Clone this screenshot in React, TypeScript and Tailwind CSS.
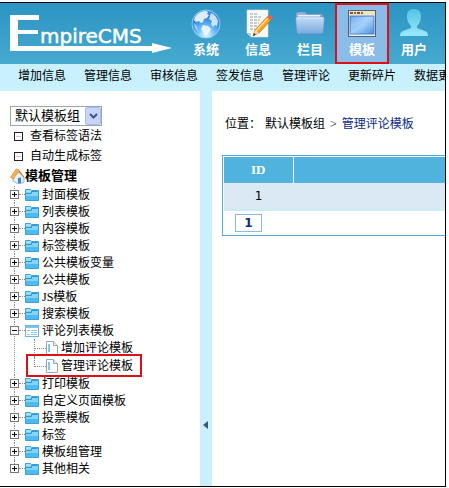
import type { ReactNode } from "react";

type NavItem = {
  label: string;
  icon: ReactNode;
  active?: boolean;
};

type TreeNode = {
  label: string;
  children?: { label: string; highlighted?: boolean }[];
};

const GlobeIcon = () => (
  <svg width="30" height="30" viewBox="0 0 30 30" aria-hidden="true">
    <defs>
      <radialGradient id="globe" cx="0.5" cy="0.9" r="0.95">
        <stop offset="0" stopColor="#e4f7ff" />
        <stop offset="0.35" stopColor="#6bbcf5" />
        <stop offset="0.7" stopColor="#2a7edc" />
        <stop offset="1" stopColor="#4f9fe6" />
      </radialGradient>
    </defs>
    <circle cx="15" cy="15" r="14" fill="url(#globe)" stroke="#a9d8f7" strokeWidth="0.8" />
    <path
      d="M4 8q4-6 11-6l2 1-1 2 2 1-2 3-3 1-1 3-2 1-2-2-3 1-2-2z"
      fill="#f1faff"
      opacity="0.9"
    />
    <path
      d="M20 4q5 2 7 8l-1 5-2-1-2 2-2-3 1-3-3-2 1-3z"
      fill="#e0f3ff"
      opacity="0.85"
    />
    <path d="M12 16l5 1 3 3-2 4-4 3-2-4-2-3z" fill="#f1faff" opacity="0.85" />
    <path d="M3 14l3 3 1 5q-4-3-4-8z" fill="#cdeaff" opacity="0.6" />
  </svg>
);

const NoteIcon = () => (
  <svg width="30" height="30" viewBox="0 0 30 30" aria-hidden="true">
    <path d="M4 1h21v27H8l-4-4z" fill="#fbfaf2" stroke="#d9dcd8" strokeWidth="0.6" />
    <path
      d="M7 5h8M7 8h12M7 11h10M7 14h9M7 17h7M7 20h5"
      stroke="#8f9db0"
      strokeWidth="1"
      strokeDasharray="3 1"
    />
    <path d="M4 24l4 4v-4z" fill="#c4cacb" />
    <path d="M10 27l2-6L24 8l4 3-12 13z" fill="#f6a423" stroke="#b8620e" strokeWidth="0.7" />
    <path d="M13 22L25 9" stroke="#ffe08a" strokeWidth="1.4" />
    <path d="M10 27l2-6 4 3z" fill="#f7ddb0" />
    <path d="M10 27l1-3 2 1.500z" fill="#333" />
    <path d="M24 8l2-2q3 0 3.500 3L28 11z" fill="#e0605a" />
  </svg>
);

const FolderIcon = () => (
  <svg width="30" height="30" viewBox="0 0 30 30" aria-hidden="true">
    <defs>
      <linearGradient id="folder" x1="0" y1="0" x2="0" y2="1">
        <stop offset="0" stopColor="#c3dcf6" />
        <stop offset="1" stopColor="#78a8dd" />
      </linearGradient>
    </defs>
    <path d="M1 5q0-2 2-2h7l2 2h14q2 0 2 2v3H1z" fill="#8fb6e2" stroke="#5d8ac2" strokeWidth="0.7" />
    <path d="M3 6h22v3H3z" fill="#eef6fd" />
    <path d="M0.500 8h29l-1 15q0 2-2 2h-23q-2 0-2-2z" fill="url(#folder)" stroke="#5d8ac2" strokeWidth="0.7" />
    <path d="M2 9h26" stroke="#e2f0fc" />
  </svg>
);

const WindowIcon = () => (
  <svg width="30" height="30" viewBox="0 0 30 30" aria-hidden="true">
    <defs>
      <linearGradient id="pane" x1="0" y1="0" x2="1" y2="1">
        <stop offset="0" stopColor="#5b9be8" />
        <stop offset="0.5" stopColor="#a4d0fa" />
        <stop offset="1" stopColor="#4b90e0" />
      </linearGradient>
    </defs>
    <rect x="1.500" y="1.500" width="27" height="26" fill="#e9eef2" stroke="#4d6380" />
    <rect x="2" y="2" width="26" height="4" fill="#f3e3b8" />
    <path d="M3 4h3M10 4h3" stroke="#b23a2c" strokeWidth="2" />
    <path d="M7 4h2M14 4h2" stroke="#438b3e" strokeWidth="2" />
    <rect x="3" y="7" width="24" height="18" fill="url(#pane)" stroke="#3b75bb" strokeWidth="0.8" />
    <path d="M4 8h22L4 19z" fill="#fff" opacity="0.15" />
  </svg>
);

const UserIcon = () => (
  <svg width="30" height="30" viewBox="0 0 30 30" aria-hidden="true">
    <defs>
      <linearGradient id="user" x1="0" y1="0" x2="0" y2="1">
        <stop offset="0" stopColor="#52c4e6" />
        <stop offset="1" stopColor="#9be9fa" />
      </linearGradient>
    </defs>
    <path
      d="M15 0c5 0 7 3 7 7 0 5-2 8-4 10v2l8 3q3 1 3 5H1q0-4 3-5l8-3v-2c-2-2-4-5-4-10 0-4 2-7 7-7z"
      fill="url(#user)"
    />
  </svg>
);

const TreeFolderIcon = () => (
  <svg width="14" height="14" viewBox="0 0 14 14" aria-hidden="true">
    <path d="M0.500 1.500h5l1 1h7v10h-13z" fill="#84d4fa" stroke="#3d9fd8" />
    <path d="M1 8h12v4H1z" fill="#4dbaf2" />
    <path d="M1 5.500h5.500v-2h6" fill="none" stroke="#2f95d3" />
    <path d="M1 3h5" stroke="#c3ecff" />
  </svg>
);

const TreeOpenIcon = () => (
  <svg width="14" height="14" viewBox="0 0 14 14" aria-hidden="true">
    <rect x="0.500" y="1.500" width="13" height="11" fill="#fff" stroke="#73b5dc" />
    <path d="M1 3h12" stroke="#7cc5ee" strokeWidth="2" />
    <path d="M2 6.500h3M2 10.500h3M6 6.500h6M6 8.500h6M6 10.500h6" stroke="#8fc9ea" />
  </svg>
);

const PageIcon = () => (
  <svg width="12" height="14" viewBox="0 0 12 14" aria-hidden="true">
    <path d="M0.500 0.500h7l4 4v9h-11z" fill="#fff" stroke="#93a9b8" />
    <path d="M7.500 0.500v4h4" fill="#e3f1f8" stroke="#93a9b8" />
    <path d="M3 3v8" stroke="#86c7e8" strokeWidth="2" />
  </svg>
);

const HomeIcon = () => (
  <svg width="15" height="16" viewBox="0 0 15 16" aria-hidden="true">
    <path d="M3 9l6-5 5 5v5.500L8 16l-5-3z" fill="#e2f1fd" stroke="#7ba9d4" strokeWidth="0.8" />
    <path d="M0.500 9.500L6 1l3 1-5.500 9z" fill="#f9b04e" stroke="#d98124" strokeWidth="0.6" />
    <path d="M9 2l5.500 7-1 0.500-5-5.500z" fill="#d98124" />
    <path d="M8 10l3-0.500v5.500L8 15.500z" fill="#3f87cc" />
  </svg>
);

const navItems: NavItem[] = [
  { label: "系统", icon: <GlobeIcon /> },
  { label: "信息", icon: <NoteIcon /> },
  { label: "栏目", icon: <FolderIcon /> },
  { label: "模板", icon: <WindowIcon />, active: true },
  { label: "用户", icon: <UserIcon /> },
];

const subMenu = [
  "增加信息",
  "管理信息",
  "审核信息",
  "签发信息",
  "管理评论",
  "更新碎片",
  "数据更新",
];

const tree: TreeNode[] = [
  { label: "封面模板" },
  { label: "列表模板" },
  { label: "内容模板" },
  { label: "标签模板" },
  { label: "公共模板变量" },
  { label: "公共模板" },
  { label: "JS模板" },
  { label: "搜索模板" },
  {
    label: "评论列表模板",
    children: [
      { label: "增加评论模板" },
      { label: "管理评论模板", highlighted: true },
    ],
  },
  { label: "打印模板" },
  { label: "自定义页面模板" },
  { label: "投票模板" },
  { label: "标签" },
  { label: "模板组管理" },
  { label: "其他相关" },
];

const Logo = () => (
  <svg width="180" height="61" viewBox="0 0 180 61" className="shrink-0" role="img" aria-label="EmpireCMS">
    <g fill="#fff">
      <rect x="10" y="12" width="8" height="36" />
      <rect x="10" y="12" width="29" height="5" />
      <rect x="10" y="27" width="28" height="4" />
      <rect x="10" y="43" width="143" height="5" />
      <polygon points="152,40 172,45 152,50" />
      <text
        x="40"
        y="40"
        stroke="#fff"
        strokeWidth="0.5"
        className="font-['DejaVu_Sans',sans-serif] text-[20px]"
      >
        mpireCMS
      </text>
    </g>
  </svg>
);

const Header = () => (
  <header>
    <div className="flex h-[61px] bg-linear-to-b from-[#2b94c2] to-[#46a9d0]">
      <Logo />
      <nav className="flex">
        {navItems.map((item) => (
          <a
            key={item.label}
            href="#"
            className={`flex shrink-0 flex-col items-center text-[13px] leading-4 font-bold text-white ${
              item.active
                ? "-mx-px w-[54px] border-2 border-[#dc1018] bg-[#8bbbe7] pt-1"
                : "w-[52px] pt-1.5"
            }`}
          >
            {item.icon}
            <span className="mt-[3px]">{item.label}</span>
          </a>
        ))}
      </nav>
    </div>
    <nav className="flex h-[27px] items-center gap-[18px] overflow-hidden bg-[#c8f0fd] pb-1 pl-[18px] whitespace-nowrap">
      {subMenu.map((label) => (
        <a key={label} href="#">
          {label}
        </a>
      ))}
    </nav>
  </header>
);

const TreeItem = ({ node, last }: { node: TreeNode; last: boolean }) => (
  <li className="relative">
    <span
      className={`absolute top-0 left-1 border-l border-dotted border-[#8a8a8a] ${
        last ? "h-2" : "h-full"
      }`}
    />
    <div className="relative flex h-[17px] items-center">
      <button
        aria-label={node.label}
        className="flex size-[9px] items-center justify-center border border-[#777] bg-white"
      >
        <svg width="5" height="5" viewBox="0 0 5 5" aria-hidden="true">
          <path d={node.children ? "M0 2.500h5" : "M0 2.500h5M2.500 0v5"} stroke="#000" />
        </svg>
      </button>
      <span className="w-1.5 border-t border-dotted border-[#8a8a8a]" />
      {node.children ? <TreeOpenIcon /> : <TreeFolderIcon />}
      <a href="#" className="ml-[3px]">
        {node.label}
      </a>
    </div>
    {node.children && (
      <ul>
        {node.children.map((child, i) => (
          <li key={child.label} className="relative flex h-[18px] items-center pl-6">
            <span
              className={`absolute top-0 left-6 border-l border-dotted border-[#8a8a8a] ${
                i === node.children!.length - 1 ? "h-2" : "h-full"
              }`}
            />
            <span className="w-3 border-t border-dotted border-[#8a8a8a]" />
            <PageIcon />
            <a href="#" className="ml-[3px]">
              {child.label}
            </a>
            {child.highlighted && (
              <span className="pointer-events-none absolute -top-[3px] left-4 h-[23px] w-[116px] border-2 border-[#dc1018]" />
            )}
          </li>
        ))}
      </ul>
    )}
  </li>
);

const Sidebar = () => (
  <aside className="w-[200px] shrink-0 px-2.5 pt-[15px] pb-[9px]">
    <div className="relative h-5 w-[92px]">
      <select
        aria-label="模板组"
        className="h-5 w-full appearance-none border border-[#9aa7b0] bg-white pl-1 text-[13px] leading-4"
      >
        <option>默认模板组</option>
      </select>
      <span className="pointer-events-none absolute top-px right-px flex h-[18px] w-4 items-center justify-center rounded-xs border border-[#a9bdec] bg-[#c5d5fb]">
        <svg width="9" height="6" viewBox="0 0 9 6" aria-hidden="true">
          <path d="M1 1l3.500 3.500L8 1" fill="none" stroke="#3f5685" strokeWidth="2" />
        </svg>
      </span>
    </div>
    {["查看标签语法", "自动生成标签"].map((label) => (
      <a key={label} href="#" className="flex h-5 items-center gap-[7px] pl-1">
        <svg width="9" height="9" viewBox="0 0 9 9" aria-hidden="true">
          <rect x="0.500" y="0.500" width="8" height="8" fill="#fff" stroke="#222" />
          <path d="M2 4.500h5" stroke="#c9c9c9" />
        </svg>
        {label}
      </a>
    ))}
    <h2 className="flex h-5 items-center text-[13px] font-bold">
      <HomeIcon />
      模板管理
    </h2>
    <ul>
      {tree.map((node, i) => (
        <TreeItem key={node.label} node={node} last={i === tree.length - 1} />
      ))}
    </ul>
  </aside>
);

const Content = () => (
  <main className="min-w-0 flex-1 overflow-hidden pt-6 pl-2.5">
    <div className="flex h-[18px] items-center pl-[3px] whitespace-nowrap">
      <span>位置：</span>
      <a href="#" className="ml-1">
        默认模板组
      </a>
      <span className="mx-[5px]">&gt;</span>
      <a href="#" className="text-[#0b2a80]">
        管理评论模板
      </a>
    </div>
    <div className="mt-[22px] border border-r-0 border-[#4fa9d8] pt-px pl-px">
      <table className="w-full border-collapse">
        <thead>
          <tr className="h-[26px] bg-[#4fb3de] font-['Liberation_Serif','Noto_Sans_CJK_SC',serif] text-[13px] text-white">
            <th className="w-[69px] border-r border-white">ID</th>
            <th />
          </tr>
        </thead>
        <tbody className="font-['DejaVu_Sans',sans-serif]">
          <tr className="h-[27px] border-b-2 border-[#cdebf2] bg-[#dbe9f5] text-center">
            <td>1</td>
            <td />
          </tr>
          <tr className="h-[25px]">
            <td colSpan={2} className="pl-[11px]">
              <a
                href="#"
                className="flex h-[18px] w-[27px] items-center justify-center border border-[#8fb8df] font-bold text-[#0b2a80]"
              >
                1
              </a>
            </td>
          </tr>
        </tbody>
      </table>
    </div>
  </main>
);

export default function App() {
  return (
    <div className="bg-white pt-0.5 pr-[3px] font-['Liberation_Serif','Noto_Sans_CJK_SC',serif] text-xs text-black">
      <div className="overflow-hidden border-y border-r border-black">
        <Header />
        <div className="flex">
          <Sidebar />
          <div className="w-3 shrink-0 bg-[#c8f0fd] pt-[330px] pl-[3px]">
            <button aria-label="收起" className="block">
              <svg width="5" height="8" viewBox="0 0 5 8" aria-hidden="true">
                <path d="M5 0v8L0 4z" fill="#3c5576" />
              </svg>
            </button>
          </div>
          <Content />
        </div>
      </div>
    </div>
  );
}
